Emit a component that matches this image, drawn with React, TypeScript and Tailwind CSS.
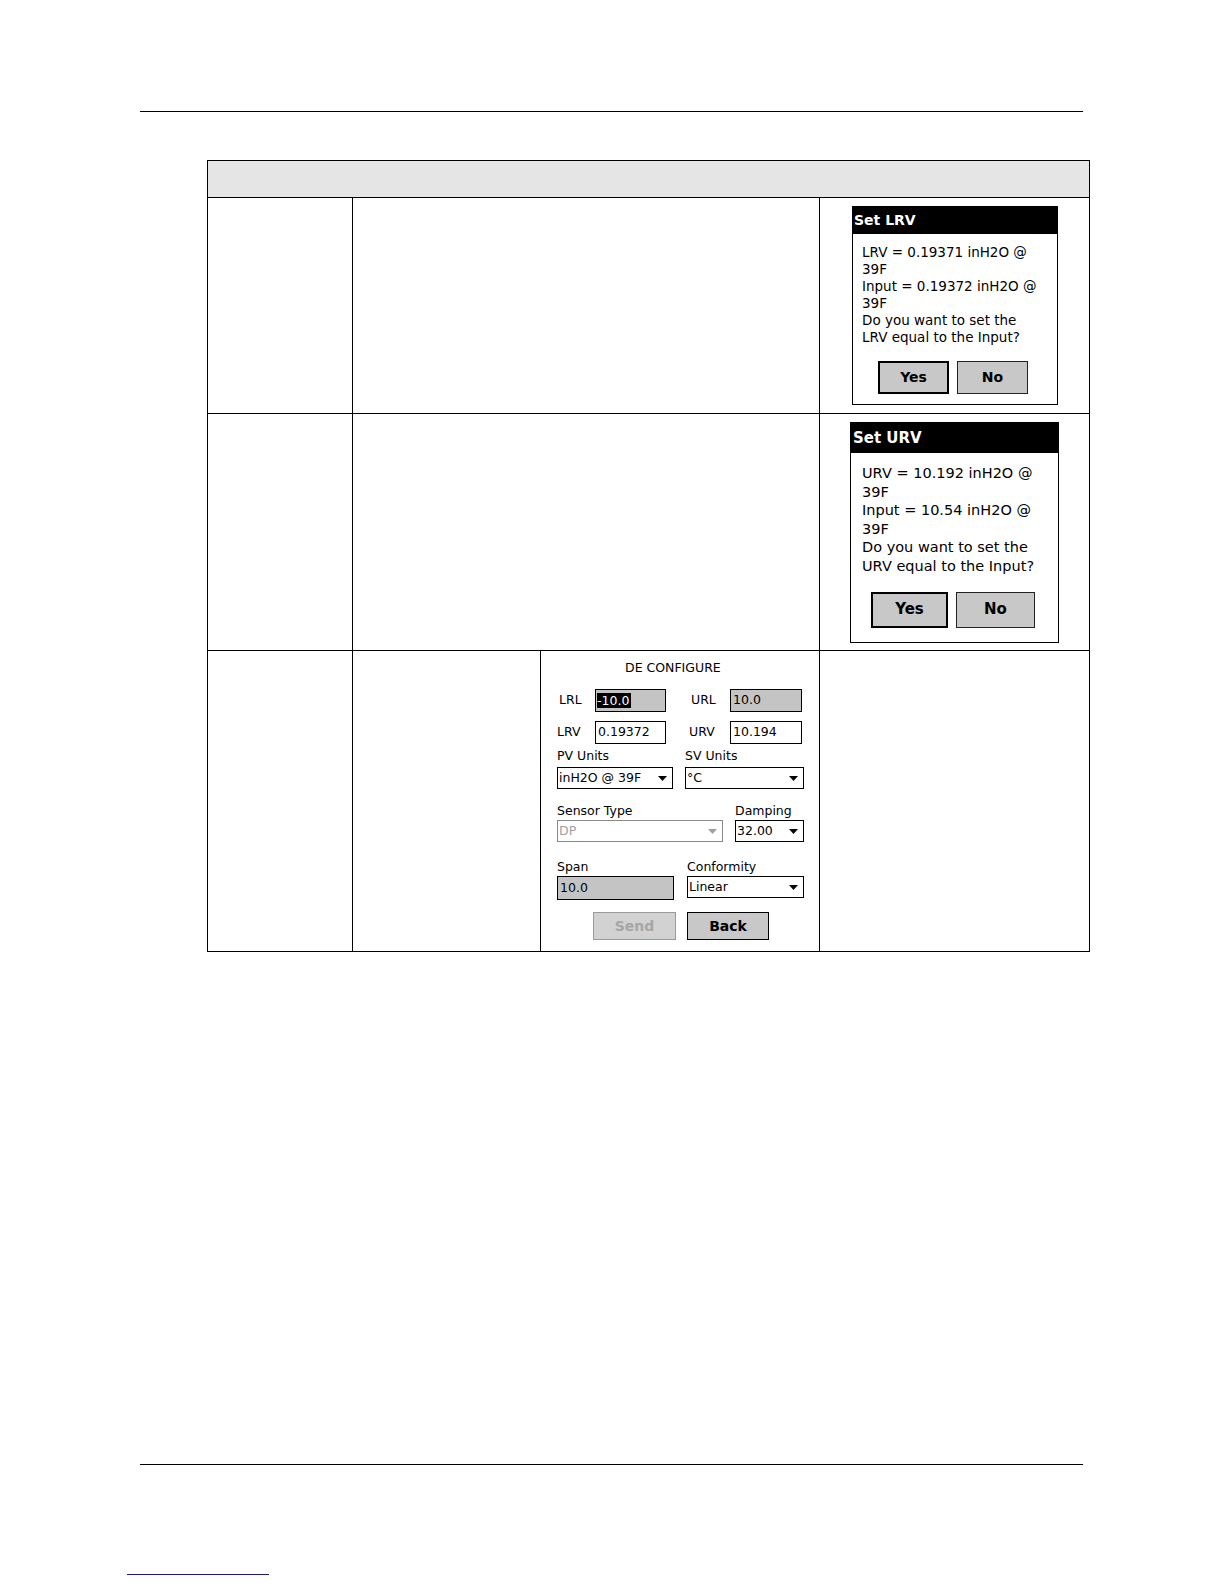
import React from "react";

const Arrow = ({ gray }: { gray?: boolean }) => (
  <svg width="9" height="5" viewBox="0 0 9 5" className="shrink-0">
    <polygon points="0,0 9,0 4.5,5" fill={gray ? "#a0a0a0" : "#000"} />
  </svg>
);

const Select = ({ w, text, gray }: { w: string; text: string; gray?: boolean }) => (
  <div
    className={`${w} h-[22px] border ${gray ? "border-[#8a8a8a] text-[#a0a0a0]" : "border-black text-black"} bg-white flex items-center justify-between pl-[1px] pr-[5px] text-[12.5px] leading-none`}
  >
    <span>{text}</span>
    <Arrow gray={gray} />
  </div>
);

function LRVDialog() {
  return (
    <div className="w-[206px] h-[199px] border border-black bg-white flex flex-col">
      <div className="h-[27px] bg-black text-white font-bold text-[14px] leading-[27px] pl-[1px]">Set LRV</div>
      <div className="pl-[9px] pt-[10px] text-[13.5px] leading-[16.9px] text-black">
        <div>LRV = 0.19371 inH2O @</div>
        <div>39F</div>
        <div>Input = 0.19372 inH2O @</div>
        <div>39F</div>
        <div>Do you want to set the</div>
        <div>LRV equal to the Input?</div>
      </div>
      <div className="flex gap-[8px] pl-[25px] mt-[16px]">
        <div className="w-[71px] h-[33px] border-2 border-black bg-[#c8c8c8] flex items-center justify-center font-bold text-[14px]">Yes</div>
        <div className="w-[71px] h-[33px] border border-[#222] bg-[#c8c8c8] flex items-center justify-center font-bold text-[14px]">No</div>
      </div>
    </div>
  );
}

function URVDialog() {
  return (
    <div className="w-[209px] h-[221px] border border-black bg-white flex flex-col">
      <div className="h-[30px] bg-black text-white font-bold text-[15px] leading-[30px] pl-[2px]">Set URV</div>
      <div className="pl-[11px] pt-[11px] text-[14.5px] leading-[18.6px] text-black">
        <div>URV = 10.192 inH2O @</div>
        <div>39F</div>
        <div>Input = 10.54 inH2O @</div>
        <div>39F</div>
        <div>Do you want to set the</div>
        <div>URV equal to the Input?</div>
      </div>
      <div className="flex gap-[8px] pl-[20px] mt-[16px]">
        <div className="w-[77px] h-[36px] border-2 border-black bg-[#c8c8c8] flex items-center justify-center font-bold text-[15px]">Yes</div>
        <div className="w-[79px] h-[36px] border border-[#222] bg-[#c8c8c8] flex items-center justify-center font-bold text-[15px]">No</div>
      </div>
    </div>
  );
}

function ConfigScreen() {
  return (
    <div className="pl-[16px] pt-[10px] text-[12.5px] text-black">
      <div className="ml-[68px] leading-[14px]">DE CONFIGURE</div>
      <div className="flex items-center mt-[14px] h-[23px]">
        <div className="w-[38px] pl-[2px]">LRL</div>
        <div className="w-[71px] h-[23px] border border-black bg-[#c4c4c4] flex items-center pl-[1px]">
          <span className="bg-black text-white leading-[15px] pr-[2px]">-10.0</span>
        </div>
        <div className="w-[64px] pl-[25px]">URL</div>
        <div className="w-[72px] h-[23px] border border-black bg-[#c4c4c4] flex items-center pl-[2px]">10.0</div>
      </div>
      <div className="flex items-center mt-[9px] h-[23px]">
        <div className="w-[38px] pl-[0px]">LRV</div>
        <div className="w-[71px] h-[23px] border border-black bg-white flex items-center pl-[2px]">0.19372</div>
        <div className="w-[64px] pl-[23px]">URV</div>
        <div className="w-[72px] h-[23px] border border-black bg-white flex items-center pl-[2px]">10.194</div>
      </div>
      <div className="flex mt-[5px] leading-[14px]">
        <div className="w-[128px]">PV Units</div>
        <div>SV Units</div>
      </div>
      <div className="flex gap-[12px] mt-[4px]">
        <Select w="w-[116px]" text="inH2O @ 39F" />
        <Select w="w-[119px]" text="°C" />
      </div>
      <div className="flex mt-[15px] leading-[14px]">
        <div className="w-[178px]">Sensor Type</div>
        <div>Damping</div>
      </div>
      <div className="flex gap-[12px] mt-[2px]">
        <Select w="w-[166px]" text="DP" gray />
        <Select w="w-[69px]" text="32.00" />
      </div>
      <div className="flex mt-[18px] leading-[14px]">
        <div className="w-[130px]">Span</div>
        <div>Conformity</div>
      </div>
      <div className="flex gap-[13px] mt-[2px] items-start">
        <div className="w-[117px] h-[24px] border border-black bg-[#c4c4c4] flex items-center pl-[2px]">10.0</div>
        <Select w="w-[117px]" text="Linear" />
      </div>
      <div className="flex gap-[11px] mt-[12px] ml-[36px]">
        <div className="w-[83px] h-[28px] border border-[#9a9a9a] bg-[#d2d2d2] text-[#a6a6a6] flex items-center justify-center font-bold text-[14px]">Send</div>
        <div className="w-[82px] h-[28px] border border-black bg-[#c8c8c8] flex items-center justify-center font-bold text-[14px]">Back</div>
      </div>
    </div>
  );
}

export default function App() {
  return (
    <div className="w-[1224px] h-[1584px] bg-white font-['DejaVu_Sans',sans-serif] text-black">
      <div className="pt-[111px]">
        <div className="ml-[140px] w-[943px] h-px bg-black" />
      </div>
      <div className="mt-[48px] ml-[207px] w-[883px] border border-black">
        <div className="h-[37px] bg-[#e5e5e5] border-b border-black" />
        <div className="flex h-[216px] border-b border-black">
          <div className="w-[145px] border-r border-black" />
          <div className="w-[467px] border-r border-black" />
          <div className="flex-1 pl-[32px] pt-[8px]">
            <LRVDialog />
          </div>
        </div>
        <div className="flex h-[237px] border-b border-black">
          <div className="w-[145px] border-r border-black" />
          <div className="w-[467px] border-r border-black" />
          <div className="flex-1 pl-[30px] pt-[8px]">
            <URVDialog />
          </div>
        </div>
        <div className="flex h-[300px]">
          <div className="w-[145px] border-r border-black" />
          <div className="w-[188px] border-r border-black" />
          <div className="w-[279px] border-r border-black">
            <ConfigScreen />
          </div>
          <div className="flex-1" />
        </div>
      </div>
      <div className="mt-[512px] ml-[140px] w-[943px] h-px bg-black" />
      <div className="mt-[109px] ml-[127px] w-[142px] h-px bg-[#1c1c7c]" />
    </div>
  );
}
